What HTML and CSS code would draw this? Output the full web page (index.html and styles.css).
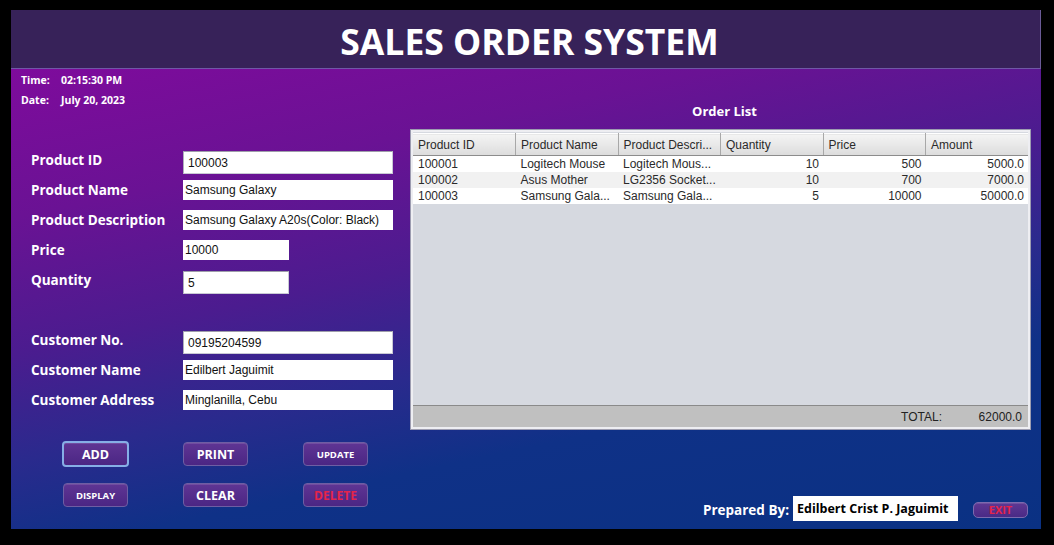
FILE: index.html
```html
<!DOCTYPE html>
<html>
<head>
<meta charset="utf-8">
<link rel="stylesheet" href="styles.css">
</head>
<body>
<div class="window">
  <header class="titlebar"><h1 class="title">SALES ORDER SYSTEM</h1></header>
  <main class="content">
    <section class="left">
      <div class="clock">
        <div class="clock-row"><span class="clock-label">Time:</span><span>02:15:30 PM</span></div>
        <div class="clock-row"><span class="clock-label">Date:</span><span>July 20, 2023</span></div>
      </div>
      <div class="form">
        <div class="row"><span class="label">Product ID</span><div class="field bevel wide">100003</div></div>
        <div class="row"><span class="label">Product Name</span><div class="field wide">Samsung Galaxy</div></div>
        <div class="row"><span class="label">Product Description</span><div class="field wide">Samsung Galaxy A20s(Color: Black)</div></div>
        <div class="row"><span class="label">Price</span><div class="field short">10000</div></div>
        <div class="row"><span class="label">Quantity</span><div class="field bevel short">5</div></div>
        <div class="spacer"></div>
        <div class="row"><span class="label">Customer No.</span><div class="field bevel wide">09195204599</div></div>
        <div class="row"><span class="label">Customer Name</span><div class="field wide">Edilbert Jaguimit</div></div>
        <div class="row"><span class="label">Customer Address</span><div class="field wide">Minglanilla, Cebu</div></div>
      </div>
      <div class="buttons">
        <button class="btn focus">ADD</button>
        <button class="btn">PRINT</button>
        <button class="btn small">UPDATE</button>
        <button class="btn small">DISPLAY</button>
        <button class="btn">CLEAR</button>
        <button class="btn danger">DELETE</button>
      </div>
    </section>
    <section class="right">
      <h2 class="list-title">Order List</h2>
      <div class="table-box">
        <table class="grid">
          <thead>
            <tr><th>Product ID</th><th>Product Name</th><th>Product Descri...</th><th>Quantity</th><th>Price</th><th>Amount</th></tr>
          </thead>
          <tbody>
            <tr><td>100001</td><td>Logitech Mouse</td><td>Logitech Mous...</td><td class="num">10</td><td class="num">500</td><td class="num">5000.0</td></tr>
            <tr class="alt"><td>100002</td><td>Asus Mother</td><td>LG2356 Socket...</td><td class="num">10</td><td class="num">700</td><td class="num">7000.0</td></tr>
            <tr><td>100003</td><td>Samsung Gala...</td><td>Samsung Gala...</td><td class="num">5</td><td class="num">10000</td><td class="num">50000.0</td></tr>
          </tbody>
        </table>
        <div class="empty"></div>
        <div class="total"><span class="total-label">TOTAL:</span><span class="total-value">62000.0</span></div>
      </div>
      <div class="footer">
        <span class="prep-label">Prepared By:</span>
        <div class="prep-field">Edilbert Crist P. Jaguimit</div>
        <button class="btn exit">EXIT</button>
      </div>
    </section>
  </main>
</div>
</body>
</html>
```
FILE: styles.css
```css
html, body {
  margin: 0;
  padding: 0;
  background: #000;
}
body {
  width: 1054px;
  height: 545px;
  overflow: hidden;
  font-family: "Open Sans", "Noto Sans", sans-serif;
}
.window {
  margin: 10px 0 0 11px;
  width: 1030px;
  height: 519px;
  display: flex;
  flex-direction: column;
}
.titlebar {
  background: #372259;
  border-bottom: 1px solid #6f58a6;
  border-right: 1px solid #6a5a96;
  box-sizing: border-box;
  height: 59px;
  padding-top: 5px;
  display: flex;
  align-items: center;
  justify-content: center;
}
.title {
  margin: 0 0 0 8px;
  color: #fff;
  font-size: 35.5px;
  font-weight: 700;
  line-height: 1;
}
.content {
  flex: 1;
  display: flex;
  background: linear-gradient(168deg, #7e0b9c 0%, #6a1294 22%, #4b1c8f 42%, #2a2a8d 58%, #0f3187 72%, #0a3183 100%);
}
.left {
  width: 400px;
  display: flex;
  flex-direction: column;
}
.clock {
  padding: 1px 0 0 10px;
  color: #fff;
  font-size: 10.5px;
  font-weight: 700;
}
.clock-row {
  height: 20px;
  line-height: 20px;
  display: flex;
}
.clock-label {
  width: 40px;
}
.form {
  margin-top: 40px;
  padding-left: 20px;
}
.row {
  height: 30px;
  display: flex;
  align-items: flex-start;
}
.spacer {
  height: 30px;
}
.label {
  width: 152px;
  margin-top: 0;
  line-height: 20px;
  color: #fff;
  font-size: 13.5px;
  font-weight: 700;
}
.field {
  height: 20px;
  box-sizing: border-box;
  background: #fff;
  color: #111;
  font-family: "Liberation Sans", Arial, sans-serif;
  font-size: 12px;
  line-height: 20px;
  padding-left: 2px;
}
.field.bevel {
  height: 23px;
  margin-top: 1px;
  line-height: 22px;
  padding-left: 4px;
  border: 1px solid #c9c9d4;
  border-top-color: #9e9eaa;
  border-left-color: #b0b0bc;
}
.field.wide {
  width: 210px;
}
.field.short {
  width: 106px;
}
.buttons {
  margin-top: 22px;
  padding-left: 52px;
  display: grid;
  grid-template-columns: 65px 65px 65px;
  column-gap: 55px;
  row-gap: 16px;
}
.btn {
  height: 24px;
  padding: 0;
  box-sizing: border-box;
  border: 1px solid #6e5ea3;
  border-radius: 4px;
  background: linear-gradient(#5f3594, #4b2684);
  box-shadow: inset 0 1px 0 rgba(255, 255, 255, 0.12);
  color: #fff;
  font-family: "Open Sans", "Noto Sans", sans-serif;
  font-size: 12.5px;
  font-weight: 700;
  cursor: pointer;
}
.btn.small {
  font-size: 9.5px;
}
.btn.danger {
  color: #e52449;
  font-size: 12px;
}
.btn.focus {
  border: 2px solid #86aee6;
  margin: -1px 0 0 -1px;
  width: 67px;
  height: 26px;
}
.right {
  flex: 1;
  display: flex;
  flex-direction: column;
  padding-right: 11px;
}
.list-title {
  margin: 32px 0 0;
  text-align: center;
  padding-left: 8px;
  line-height: 20px;
  height: 20px;
  color: #fff;
  font-size: 13px;
  font-weight: 700;
}
.table-box {
  margin-top: 9px;
  height: 299px;
  box-sizing: border-box;
  border: 2px solid #eeeef2;
  box-shadow: 0 0 0 1px #9c9cb0;
  background: #d6d9e0;
  display: flex;
  flex-direction: column;
  font-family: "Liberation Sans", Arial, sans-serif;
  font-size: 12px;
  color: #2a2a2a;
}
.grid {
  border-collapse: collapse;
  table-layout: fixed;
  width: 100%;
  margin-top: 1px;
}
.grid th {
  height: 21px;
  padding: 0 0 0 5px;
  text-align: left;
  font-weight: 400;
  background: linear-gradient(#f4f4f4, #dcdcdc);
  border-right: 1px solid #a8a8a8;
  border-bottom: 1px solid #8c8c8c;
  border-top: 1px solid #ffffff;
  white-space: nowrap;
  overflow: hidden;
}
.grid th:last-child {
  border-right: none;
}
.grid td {
  height: 16px;
  padding: 0 0 0 5px;
  line-height: 16px;
  background: #fff;
  white-space: nowrap;
  overflow: hidden;
}
.grid tr.alt td {
  background: #f1f1f1;
}
.grid td.num {
  text-align: right;
  padding: 0 4px 0 0;
}
.empty {
  flex: 1;
}
.total {
  height: 21px;
  background: #c0c0c0;
  border-top: 1px solid #8a8a8a;
  display: flex;
  align-items: center;
  justify-content: flex-end;
  padding-right: 6px;
  color: #222;
}
.total-value {
  width: 80px;
  text-align: right;
}
.footer {
  margin-top: 67px;
  display: flex;
  align-items: center;
  justify-content: flex-end;
  padding-right: 2px;
}
.prep-label {
  color: #fff;
  font-size: 13.5px;
  font-weight: 700;
  margin-right: 4px;
  padding-top: 3px;
}
.prep-field {
  width: 165px;
  height: 25px;
  box-sizing: border-box;
  background: #fff;
  color: #000;
  font-size: 12.5px;
  font-weight: 700;
  line-height: 25px;
  padding-left: 4px;
  white-space: nowrap;
}
.btn.exit {
  margin-left: 15px;
  margin-top: 2px;
  width: 55px;
  height: 16px;
  border-radius: 5px;
  border-color: #7c6aae;
  background: linear-gradient(#5e3893, #4a2a86);
  color: #e52449;
  font-size: 11px;
  line-height: 12px;
}
```
